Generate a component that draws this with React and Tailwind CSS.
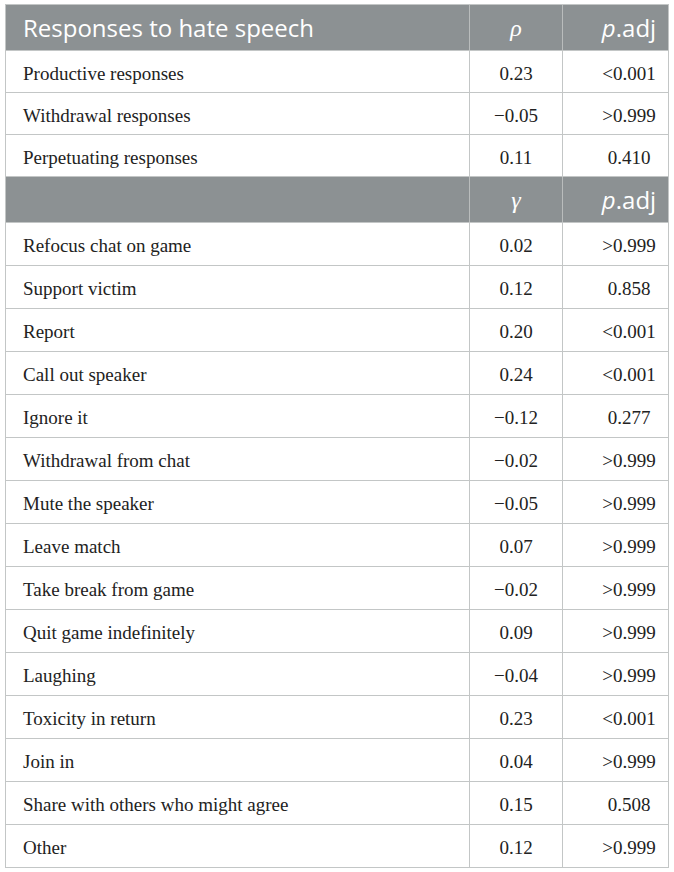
const groups = [
  {
    head: ["Responses to hate speech", "ρ"],
    rows: [
      ["Productive responses", "0.23", "<0.001"],
      ["Withdrawal responses", "−0.05", ">0.999"],
      ["Perpetuating responses", "0.11", "0.410"],
    ],
    rowH: "h-[42px]",
  },
  {
    head: ["", "γ"],
    rows: [
      ["Refocus chat on game", "0.02", ">0.999"],
      ["Support victim", "0.12", "0.858"],
      ["Report", "0.20", "<0.001"],
      ["Call out speaker", "0.24", "<0.001"],
      ["Ignore it", "−0.12", "0.277"],
      ["Withdrawal from chat", "−0.02", ">0.999"],
      ["Mute the speaker", "−0.05", ">0.999"],
      ["Leave match", "0.07", ">0.999"],
      ["Take break from game", "−0.02", ">0.999"],
      ["Quit game indefinitely", "0.09", ">0.999"],
      ["Laughing", "−0.04", ">0.999"],
      ["Toxicity in return", "0.23", "<0.001"],
      ["Join in", "0.04", ">0.999"],
      ["Share with others who might agree", "0.15", "0.508"],
      ["Other", "0.12", ">0.999"],
    ],
    rowH: "h-[43px]",
  },
];

const HeadRow = ({ title, stat }) => (
  <div className="grid grid-cols-[463px_93px_106px] h-[46px] bg-[#8c9193] text-white font-['Open_Sans',sans-serif] text-[24px] border-b border-[#c3c6c6]">
    <div className="flex items-center pl-[17px]">{title}</div>
    <div className="flex items-center justify-center border-l border-[#b9bcbc] font-['Liberation_Serif',serif] italic font-light">{stat}</div>
    <div className="flex items-center justify-center pl-[27px] border-l border-[#b9bcbc]">
      <span className="italic">p</span>.adj
    </div>
  </div>
);

const BodyRow = ({ label, value, p, h }) => (
  <div className={"grid grid-cols-[463px_93px_106px] border-b border-[#c3c6c6] text-[#222] font-['Liberation_Serif',serif] text-[19px] " + h}>
    <div className="flex items-center pl-[17px] pt-[5px]">{label}</div>
    <div className="flex items-center justify-center pt-[5px] border-l border-[#c3c6c6]">{value}</div>
    <div className="flex items-center justify-center pl-[27px] pt-[5px] border-l border-[#c3c6c6]">{p}</div>
  </div>
);

export default function App() {
  return (
    <div className="bg-white w-[674px] h-[872px] pt-[4px] pl-[5px]">
      <div className="w-[664px] border-x border-t border-[#c3c6c6]">
        {groups.map((g, i) => (
          <div key={i}>
            <HeadRow title={g.head[0]} stat={g.head[1]} />
            {g.rows.map((r) => (
              <BodyRow key={r[0]} label={r[0]} value={r[1]} p={r[2]} h={g.rowH} />
            ))}
          </div>
        ))}
      </div>
    </div>
  );
}
